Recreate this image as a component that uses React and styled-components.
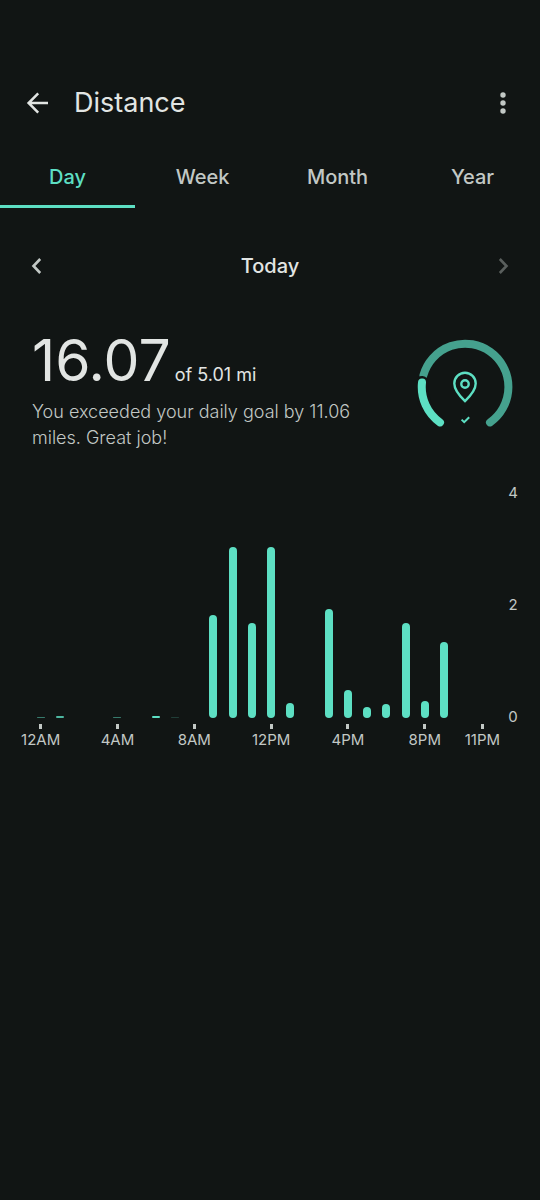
import React, { Component } from "react"
import styled, { createGlobalStyle } from "styled-components"

const colors = {
  background: "#111514",
  text: "#e2e5e3",
  muted: "#c2c8c5",
  disabled: "#5a5f5d",
  accent: "#5ddfc3",
  accentDim: "#45a18e",
}

const TABS = ["Day", "Week", "Month", "Year"]

const SCALE = [4, 2, 0]

// miles walked in each hour of the day
const HOURS = [
  { miles: 0.01, label: "12AM", opacity: 0.5 },
  { miles: 0.03, opacity: 0.8 },
  { miles: 0 },
  { miles: 0 },
  { miles: 0.01, label: "4AM", opacity: 0.5 },
  { miles: 0 },
  { miles: 0.04 },
  { miles: 0.01, opacity: 0.2 },
  { miles: 0, label: "8AM" },
  { miles: 1.83 },
  { miles: 3.04 },
  { miles: 1.69 },
  { miles: 3.04, label: "12PM" },
  { miles: 0.26 },
  { miles: 0 },
  { miles: 1.94 },
  { miles: 0.49, label: "4PM" },
  { miles: 0.19 },
  { miles: 0.25 },
  { miles: 1.69 },
  { miles: 0.31, label: "8PM" },
  { miles: 1.35 },
  { miles: 0 },
  { miles: 0, label: "11PM" },
]

const GlobalStyle = createGlobalStyle`
  * {
    box-sizing: border-box;
  }

  body {
    margin: 0;
    background: ${colors.background};
    color: ${colors.text};
    font-family: Inter, Roboto, sans-serif;
  }
`

const Page = styled.main`
  min-height: 100vh;
  padding-top: 73px;
  background: ${colors.background};
`

const Header = styled.header`
  display: flex;
  align-items: center;
  height: 60px;
  padding: 0 16px;
`

const IconButton = styled.button`
  display: flex;
  align-items: center;
  justify-content: center;
  width: 42px;
  height: 42px;
  padding: 0;
  border: 0;
  background: none;
  color: ${props => (props.$muted ? colors.muted : colors.text)};
  cursor: pointer;

  &:disabled {
    color: ${colors.disabled};
    cursor: default;
  }
`

const Title = styled.h1`
  flex: 1;
  margin: 0;
  padding-left: 16px;
  font-size: 27px;
  font-weight: 400;
  line-height: 36px;
`

const Tabs = styled.div`
  display: flex;
  margin-top: 11px;
`

const Tab = styled.button`
  flex: 1;
  height: 64px;
  padding: 4px 0 0;
  border: 0;
  border-bottom: 3px solid ${props => (props.$active ? colors.accent : "transparent")};
  background: none;
  color: ${props => (props.$active ? colors.accent : colors.muted)};
  font-family: inherit;
  font-size: 20px;
  font-weight: 500;
  line-height: 28px;
  cursor: pointer;
`

const DateNav = styled.nav`
  display: flex;
  align-items: center;
  justify-content: space-between;
  margin-top: 37px;
  padding: 0 16px;
`

const DateLabel = styled.h2`
  margin: 0;
  font-size: 20px;
  font-weight: 500;
  line-height: 28px;
`

const Summary = styled.section`
  display: flex;
  justify-content: space-between;
  align-items: flex-start;
  margin-top: 51px;
  padding: 0 27px 0 32px;
`

const SummaryText = styled.div`
  flex: 1;
  max-width: 336px;
`

const Total = styled.p`
  display: flex;
  align-items: baseline;
  gap: 4px;
  margin: 0;
  font-size: 18px;
  line-height: 46px;
`

const TotalValue = styled.strong`
  font-size: 57px;
  font-weight: 400;
`

const Message = styled.p`
  margin: 1px 0 0;
  color: ${colors.muted};
  font-size: 18px;
  font-weight: 300;
  line-height: 26px;
`

const Gauge = styled.svg`
  flex: none;
  width: 96px;
  height: 96px;
  margin-top: 1px;
`

const Chart = styled.section`
  display: flex;
  margin-top: 32px;
  padding: 0 16px 0 31px;
`

const Plot = styled.div`
  flex: 1;
  padding-top: 10px;
`

const Bars = styled.div`
  display: grid;
  grid-template-columns: repeat(24, 1fr);
  align-items: end;
  justify-items: center;
  height: 225px;
`

const Bar = styled.div`
  width: 8px;
  border-radius: 4px;
  background: ${colors.accent};
`

const HourAxis = styled.div`
  display: grid;
  grid-template-columns: repeat(24, 1fr);
  margin-top: 6px;
`

const Hour = styled.div`
  display: flex;
  flex-direction: column;
  align-items: center;
  width: 100%;
  min-width: 0;
  color: ${colors.muted};
  font-size: 15px;
  line-height: 22px;
  white-space: nowrap;

  &::before {
    content: "";
    width: 3px;
    height: 5px;
    background: ${props => (props.$tick ? colors.muted : "transparent")};
  }
`

const MileAxis = styled.div`
  display: flex;
  flex-direction: column;
  justify-content: space-between;
  align-items: center;
  width: 32px;
  height: 244px;
  padding-left: 10px;
  color: ${colors.muted};
  font-size: 15px;
  line-height: 20px;
`

const BackIcon = () => (
  <svg width="24" height="24" viewBox="0 0 24 24" fill="none" stroke="currentColor" strokeWidth="2.5">
    <path d="M23 12H4M13.2 2.4L3.6 12l9.6 9.6" />
  </svg>
)

const MoreIcon = () => (
  <svg width="24" height="24" viewBox="0 0 24 24" fill="currentColor">
    <circle cx="12" cy="4" r="2.7" />
    <circle cx="12" cy="12" r="2.7" />
    <circle cx="12" cy="20" r="2.7" />
  </svg>
)

const ChevronIcon = ({ d }) => (
  <svg width="24" height="24" viewBox="0 0 24 24" fill="none" stroke="currentColor" strokeWidth="2.6">
    <path d={d} />
  </svg>
)

const GoalGauge = () => (
  <Gauge viewBox="0 0 96 96" fill="none" role="img" aria-label="Daily goal exceeded">
    <path d="M6.5 36A43.3 43.3 0 1 1 73 83.4" stroke={colors.accentDim} strokeWidth="8" strokeLinecap="round" />
    <path d="M23 83.4A43.3 43.3 0 0 1 5 43.5" stroke={colors.background} strokeWidth="13" strokeLinecap="round" />
    <path d="M23 83.4A43.3 43.3 0 0 1 5 43.5" stroke={colors.accent} strokeWidth="8" strokeLinecap="round" />
    <path
      d="M48 62.2C41.5 56 37.3 50.6 37.3 44.6A10.7 10.9 0 0 1 58.7 44.6C58.7 50.6 54.5 56 48 62.2Z"
      stroke={colors.accent}
      strokeWidth="2.4"
    />
    <circle cx="48" cy="45" r="3.7" stroke={colors.accent} strokeWidth="2.4" />
    <path d="M44.6 80.6l2.6 2.6 5-5" stroke={colors.accent} strokeWidth="2" />
  </Gauge>
)

export default class App extends Component {
  constructor(props) {
    super(props)
    this.state = {
      tab: "Day",
    }
  }

  render() {
    const tabs = TABS.map(tab => (
      <Tab
        key={tab}
        type="button"
        role="tab"
        aria-selected={tab === this.state.tab}
        $active={tab === this.state.tab}
        onClick={() => this.setState({ tab })}
      >
        {tab}
      </Tab>
    ))

    const bars = HOURS.map((hour, idx) => (
      <Bar key={idx} style={{ height: `${(hour.miles / SCALE[0]) * 100}%`, opacity: hour.opacity }} />
    ))

    const hours = HOURS.map((hour, idx) => (
      <Hour key={idx} $tick={!!hour.label}>
        {hour.label}
      </Hour>
    ))

    return (
      <Page>
        <GlobalStyle />
        <Header>
          <IconButton type="button" aria-label="Back">
            <BackIcon />
          </IconButton>
          <Title>Distance</Title>
          <IconButton type="button" aria-label="More options" $muted>
            <MoreIcon />
          </IconButton>
        </Header>
        <Tabs role="tablist">{tabs}</Tabs>
        <DateNav>
          <IconButton type="button" aria-label="Previous day" $muted>
            <ChevronIcon d="M15.2 5L8.5 12l6.7 7" />
          </IconButton>
          <DateLabel>Today</DateLabel>
          <IconButton type="button" aria-label="Next day" disabled>
            <ChevronIcon d="M8.8 5l6.7 7-6.7 7" />
          </IconButton>
        </DateNav>
        <Summary>
          <SummaryText>
            <Total>
              <TotalValue>16.07</TotalValue> of 5.01 mi
            </Total>
            <Message>You exceeded your daily goal by 11.06 miles. Great job!</Message>
          </SummaryText>
          <GoalGauge />
        </Summary>
        <Chart>
          <Plot>
            <Bars>{bars}</Bars>
            <HourAxis>{hours}</HourAxis>
          </Plot>
          <MileAxis>
            {SCALE.map(mile => (
              <span key={mile}>{mile}</span>
            ))}
          </MileAxis>
        </Chart>
      </Page>
    )
  }
}
